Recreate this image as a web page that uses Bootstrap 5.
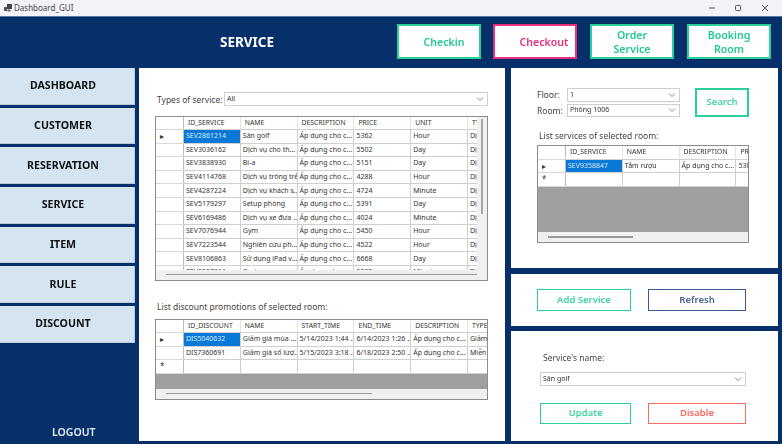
<!DOCTYPE html>
<html lang="vi">
<head>
<meta charset="utf-8">
<title>Dashboard_GUI</title>
<link href="https://cdn.jsdelivr.net/npm/bootstrap@5.3.0/dist/css/bootstrap.min.css" rel="stylesheet">
<style>
html,body{width:782px;height:444px;overflow:hidden;margin:0}
body{background:#07306b;font-family:"Noto Sans","Open Sans",sans-serif;color:#333}
.app-blur{filter:blur(.4px);width:782px;height:444px;display:flex;flex-direction:column}
.win-bar{height:16px;background:#f3f3f9;border-bottom:1px solid #5a7aa6;box-sizing:content-box;font-size:8px;color:#444;padding-left:4px}
.win-bar .win-ctrl{width:26.5px;display:flex;justify-content:center}
.win-title{margin-left:2px}
.head-bar{height:51px;padding-top:7px;padding-left:397px;position:relative}
.page-title{position:absolute;left:0;width:494px;top:15px;text-align:center;color:#fff;font-size:13.5px;font-weight:700}
.top-btn{width:84px;height:35px;background:#fff;border:2px solid #2bcf9b;border-radius:0;padding:0;font-size:10.6px;font-weight:600;line-height:14px;color:#22c98f;display:flex;align-items:center;justify-content:center;text-align:center}
.top-btn.pink{border-color:#e8307c;color:#e8307c;padding-left:18px}
.top-btn.ck{padding-left:10px}
.gap-a{margin-right:12px}.gap-b{margin-right:13px}
.work{height:373px}
.side{width:135px;margin-right:4px;position:relative}
.side-btn{height:36.5px;margin-bottom:3.2px;background:#d4e5f1;border:0;border-radius:0;border-bottom:1px solid #b9c8d6;border-right:1px solid #b9c8d6;width:135px;font-size:10.6px;font-weight:700;color:#111;padding:1px 8px 0 0;text-align:center;display:block}
.logout{position:absolute;left:52px;top:357px;color:#e6edf6;font-size:10.5px;font-weight:600}
.main-pane{width:366px;height:373px;background:#fff;margin-right:6px;padding:24px 17px 0 16px}
.right-col{width:267px}
.pane-a{height:200px;background:#fff;margin-bottom:6px;padding:20px 29px 0 26px}
.pane-b{height:52px;background:#fff;margin-bottom:5px;padding:15px 32px 0 26px}
.pane-c{height:110px;background:#fff;padding:21px 32px 0 29px}
.lbl{font-size:8.5px;color:#444;line-height:12px;white-space:nowrap}
.pick{height:13.5px;min-height:0;border:1px solid #cfcfcf;border-radius:0;font-size:7px;line-height:10px;padding:0 14px 0 2px;color:#333;background-color:#fff;background-image:url("data:image/svg+xml,%3csvg xmlns='http://www.w3.org/2000/svg' viewBox='0 0 8 8'%3e%3cpath fill='none' stroke='%23888' d='M1 2.5l3 3 3-3'/%3e%3c/svg%3e");background-position:right 3px center;background-size:8px 8px;font-family:inherit}
.grid-box{border:1px solid #8c8c8c;background:#9f9f9f;display:flex;flex-direction:column;overflow:hidden}
.g1{width:333px;height:165px;margin-top:9.5px}
.g2{width:333px;height:81px;margin-top:6px}
.g3{width:212px;height:98px;margin-top:3px}
.g-top{flex:1 1 0;min-height:0;display:flex}
.g-view{flex:1 1 0;min-width:0;overflow:hidden;background:#9f9f9f}
.g1 .g-view{background:#fff}
.g-tbl{table-layout:fixed;border-collapse:collapse;margin:0;background:#fff;font-size:7px;color:#333}
.g-tbl td,.g-tbl th{height:13.6px;padding:0 0 0 2px;border:1px solid #cfcfcf;border-top:0;border-left:0;font-weight:400;white-space:nowrap;overflow:hidden;line-height:12px;vertical-align:middle}
.g-tbl th{padding-left:4px;font-size:6.8px;border-bottom:1px solid #cfcfcf;border-right:1px solid #e4e4e4;height:13px;background:#fff}
.g-tbl .rh{width:27.5px;padding:0 0 0 4px;font-size:8px;text-align:left;border-right:1px solid #bcbcbc;border-bottom:1px solid #d8d8d8;color:#333}
.g-tbl .sel{background:#0a78d7;color:#dcecfa}
.c-w{width:56.8px}
.v-bar{width:10px;background:#f0f0f0;padding:2px 4px 0}
.v-thumb{width:2px;height:95px;background:#a6a6a6}
.h-bar{height:10px;background:#f0f0f0;flex:0 0 auto;padding-top:4px;padding-left:10px;border-top:0}
.h-thumb{height:1.5px;background:#9a9a9a}
.act{height:22px;background:#fff;border:1px solid #2bcf9b;border-radius:0;padding:0;font-size:9.5px;font-weight:600;color:#3fd3a4;display:flex;align-items:center;justify-content:center}
.act.navy{border-color:#3b5b92;color:#4a6593}
.act.red{border-color:#f76d66;color:#f76d66}
.act.low{height:21.5px}
.search-btn{width:54px;height:29px;border-width:2px;margin-left:15px}
.row-lbl{width:30px;flex:none;padding-top:1px}
.types-lbl{width:67px;flex:none;margin-left:2px;padding-top:2px}
</style>
</head>
<body>
<div class="app-blur">
<div class="win-bar d-flex align-items-center">
 <svg width="8" height="8" viewBox="0 0 8 8"><rect x="3" y="0" width="5" height="5" fill="#444"/><rect x="0" y="3" width="3" height="4" fill="#555"/><rect x="3.5" y="5.5" width="3" height="2" fill="#666"/></svg>
 <span class="win-title">Dashboard_GUI</span>
 <div class="ms-auto d-flex me-1">
  <div class="win-ctrl"><svg width="8" height="8" viewBox="0 0 8 8"><path d="M1 4h6" stroke="#555" stroke-width="1"/></svg></div>
  <div class="win-ctrl"><svg width="8" height="8" viewBox="0 0 8 8"><rect x="1.5" y="1.5" width="5" height="5" rx=".8" fill="none" stroke="#555"/></svg></div>
  <div class="win-ctrl"><svg width="8" height="8" viewBox="0 0 8 8"><path d="M1 1l6 6M7 1l-6 6" stroke="#555" stroke-width="1"/></svg></div>
 </div>
</div>
<div class="head-bar d-flex align-items-start">
 <div class="page-title">SERVICE</div>
 <button class="btn top-btn ck gap-a">Checkin</button>
 <button class="btn top-btn pink gap-b">Checkout</button>
 <button class="btn top-btn gap-b">Order<br>Service</button>
 <button class="btn top-btn">Booking<br>Room</button>
</div>
<div class="work d-flex">
 <div class="side">
  <button class="btn side-btn">DASHBOARD</button>
  <button class="btn side-btn">CUSTOMER</button>
  <button class="btn side-btn">RESERVATION</button>
  <button class="btn side-btn">SERVICE</button>
  <button class="btn side-btn">ITEM</button>
  <button class="btn side-btn">RULE</button>
  <button class="btn side-btn">DISCOUNT</button>
  <div class="logout">LOGOUT</div>
 </div>
 <div class="main-pane">
  <div class="d-flex align-items-center">
   <span class="lbl types-lbl">Types of service:</span>
   <select class="form-select pick"><option>All</option></select>
  </div>
  <div class="grid-box g1">
   <div class="g-top">
    <div class="g-view">
     <table class="table g-tbl">
      <thead><tr><th class="rh"></th><th class="c-w">ID_SERVICE</th><th class="c-w">NAME</th><th class="c-w">DESCRIPTION</th><th class="c-w">PRICE</th><th class="c-w">UNIT</th><th class="c-w">TYPE</th></tr></thead>
      <tbody>
      <tr><td class="rh">▸</td><td class="sel">SEV2861214</td><td>Sân golf</td><td>Áp dụng cho c...</td><td>5362</td><td>Hour</td><td>Dịch vụ</td></tr>
      <tr><td class="rh"></td><td>SEV3036162</td><td>Dịch vụ cho th...</td><td>Áp dụng cho c...</td><td>5502</td><td>Day</td><td>Dịch vụ</td></tr>
      <tr><td class="rh"></td><td>SEV3838930</td><td>Bi-a</td><td>Áp dụng cho c...</td><td>5151</td><td>Day</td><td>Dịch vụ</td></tr>
      <tr><td class="rh"></td><td>SEV4114768</td><td>Dịch vụ trông trẻ</td><td>Áp dụng cho c...</td><td>4288</td><td>Hour</td><td>Dịch vụ</td></tr>
      <tr><td class="rh"></td><td>SEV4287224</td><td>Dịch vụ khách s...</td><td>Áp dụng cho c...</td><td>4724</td><td>Minute</td><td>Dịch vụ</td></tr>
      <tr><td class="rh"></td><td>SEV5179297</td><td>Setup phòng</td><td>Áp dụng cho c...</td><td>5391</td><td>Day</td><td>Dịch vụ</td></tr>
      <tr><td class="rh"></td><td>SEV6169486</td><td>Dịch vụ xe đưa ...</td><td>Áp dụng cho c...</td><td>4024</td><td>Minute</td><td>Dịch vụ</td></tr>
      <tr><td class="rh"></td><td>SEV7076944</td><td>Gym</td><td>Áp dụng cho c...</td><td>5450</td><td>Hour</td><td>Dịch vụ</td></tr>
      <tr><td class="rh"></td><td>SEV7223544</td><td>Nghiên cứu ph...</td><td>Áp dụng cho c...</td><td>4522</td><td>Hour</td><td>Dịch vụ</td></tr>
      <tr><td class="rh"></td><td>SEV8106863</td><td>Sử dụng iPad v...</td><td>Áp dụng cho c...</td><td>6668</td><td>Day</td><td>Dịch vụ</td></tr>
      <tr><td class="rh"></td><td>SEV8557316</td><td>Casino</td><td>Áp dụng cho c...</td><td>5882</td><td>Minute</td><td>Dịch vụ</td></tr>
      </tbody>
     </table>
    </div>
    <div class="v-bar"><div class="v-thumb"></div></div>
   </div>
   <div class="h-bar" style="padding-right:10px"><div class="h-thumb"></div></div>
  </div>
  <div class="lbl" style="margin-top:20px;margin-left:2px">List discount promotions of selected room:</div>
  <div class="grid-box g2">
   <div class="g-top">
    <div class="g-view">
     <table class="table g-tbl">
      <thead><tr><th class="rh"></th><th class="c-w">ID_DISCOUNT</th><th class="c-w">NAME</th><th class="c-w">START_TIME</th><th class="c-w">END_TIME</th><th class="c-w">DESCRIPTION</th><th class="c-w">TYPE</th></tr></thead>
      <tbody>
      <tr><td class="rh">▸</td><td class="sel">DIS5040632</td><td>Giảm giá mùa ...</td><td>5/14/2023 1:44 ...</td><td>6/14/2023 1:26 ...</td><td>Áp dụng cho c...</td><td>Giảm giá</td></tr>
      <tr><td class="rh"></td><td>DIS7360691</td><td>Giảm giá số lượ...</td><td>5/15/2023 3:18 ...</td><td>6/18/2023 2:50 ...</td><td>Áp dụng cho c...</td><td>Miễn phí</td></tr>
      <tr><td class="rh">*</td><td></td><td></td><td></td><td></td><td></td><td></td></tr>
      </tbody>
     </table>
    </div>
   </div>
   <div class="h-bar" style="padding-right:115px"><div class="h-thumb"></div></div>
  </div>
 </div>
 <div class="right-col">
  <div class="pane-a">
   <div class="d-flex">
    <div style="width:143px;flex:none">
     <div class="d-flex align-items-center" style="margin-bottom:2px"><span class="lbl row-lbl">Floor:</span><select class="form-select pick"><option>1</option></select></div>
     <div class="d-flex align-items-center"><span class="lbl row-lbl">Room:</span><select class="form-select pick"><option>Phòng 1006</option></select></div>
    </div>
    <button class="btn act search-btn">Search</button>
   </div>
   <div class="lbl" style="margin:13px 0 0 2px">List services of selected room:</div>
   <div class="grid-box g3">
    <div class="g-top">
     <div class="g-view">
      <table class="table g-tbl">
       <thead><tr><th class="rh"></th><th class="c-w">ID_SERVICE</th><th class="c-w">NAME</th><th class="c-w">DESCRIPTION</th><th class="c-w">PRICE</th></tr></thead>
       <tbody>
       <tr><td class="rh">▸</td><td class="sel">SEV9358847</td><td>Tắm rượu</td><td>Áp dụng cho c...</td><td>5300</td></tr>
       <tr><td class="rh">*</td><td></td><td></td><td></td><td></td></tr>
       </tbody>
      </table>
     </div>
    </div>
    <div class="h-bar" style="padding-right:115px"><div class="h-thumb"></div></div>
   </div>
  </div>
  <div class="pane-b d-flex">
   <button class="btn act" style="width:94px;margin-right:17px">Add Service</button>
   <button class="btn act navy" style="width:98px">Refresh</button>
  </div>
  <div class="pane-c">
   <div class="lbl" style="margin-left:3px">Service's name:</div>
   <select class="form-select pick" style="margin-top:8px;width:206px"><option>Sân golf</option></select>
   <div class="d-flex" style="margin-top:17px">
    <button class="btn act low" style="width:91px;margin-right:17px">Update</button>
    <button class="btn act red low" style="width:98px">Disable</button>
   </div>
  </div>
 </div>
</div>
</div>
</body>
</html>
